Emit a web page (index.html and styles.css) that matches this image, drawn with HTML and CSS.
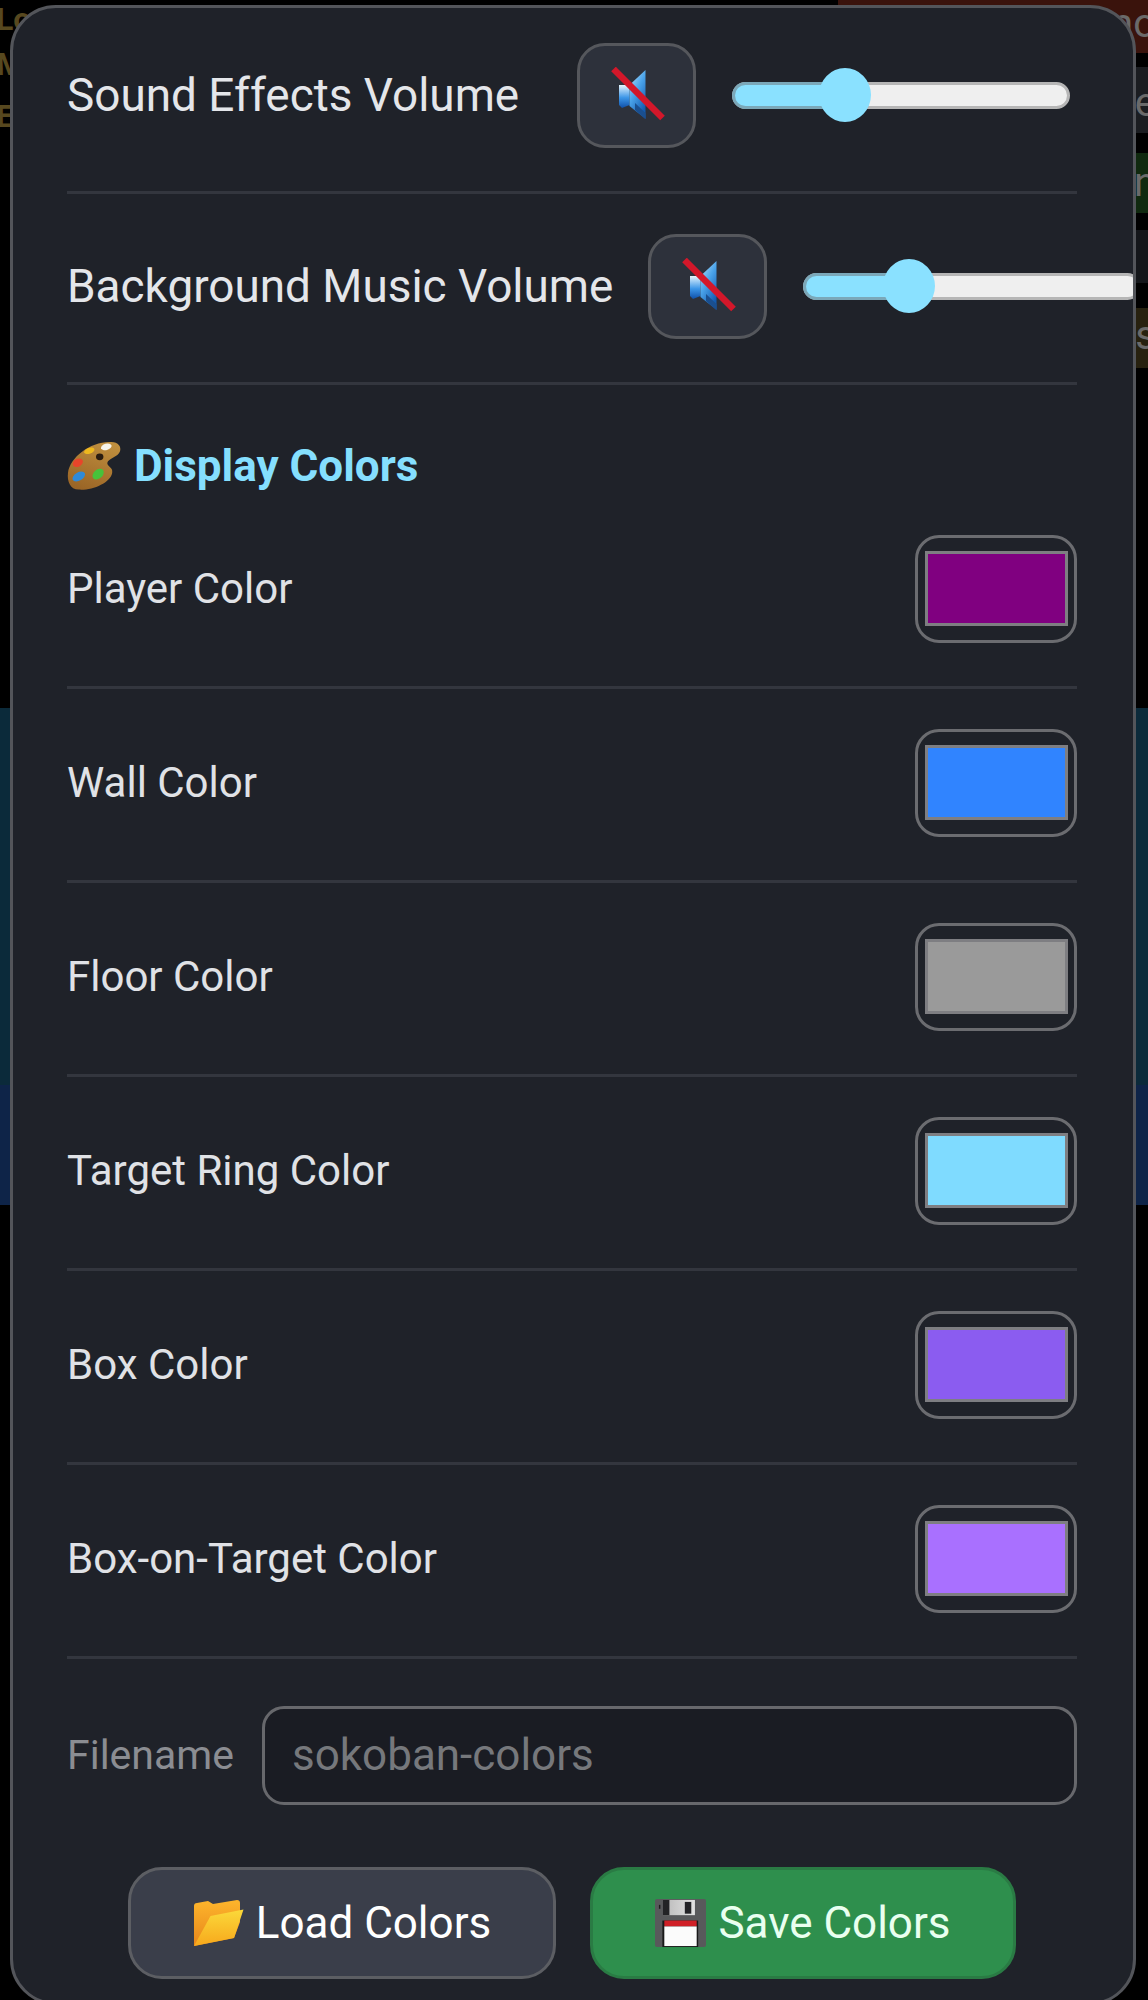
FILE: index.html
```html
<!DOCTYPE html>
<html lang="en">
<head>
<meta charset="utf-8">
<title>Settings</title>
<link rel="stylesheet" href="styles.css">
</head>
<body>
<div class="backdrop">
  <div class="bd-top">
    <div class="bd-left"><div>Lo</div><div>M</div><div>E</div></div>
    <div class="bd-right">
      <div class="bd-strip bd-red">mo</div>
      <div class="bd-strip bd-gray">e</div>
      <div class="bd-strip bd-green">n</div>
      <div class="bd-strip bd-slate"></div>
      <div class="bd-strip bd-olive">s</div>
    </div>
  </div>
  <div class="bd-teal"></div>
  <div class="bd-navy"></div>
</div>

<main class="panel">
  <div class="audio-row">
    <span class="audio-label">Sound Effects Volume</span>
    <div class="audio-controls">
      <button class="mute" type="button" aria-label="Unmute">
        <svg class="mute-icon" viewBox="0 0 56 56"><use href="#muted"/></svg>
      </button>
      <div class="slider"><span class="fill" style="width:113px"></span><span class="thumb" style="left:113px"></span></div>
    </div>
  </div>
  <div class="audio-row">
    <span class="audio-label">Background Music Volume</span>
    <div class="audio-controls">
      <button class="mute" type="button" aria-label="Unmute">
        <svg class="mute-icon" viewBox="0 0 56 56"><use href="#muted"/></svg>
      </button>
      <div class="slider"><span class="fill" style="width:106px"></span><span class="thumb" style="left:106px"></span></div>
    </div>
  </div>

  <h2 class="section-title">
    <svg class="palette" viewBox="0 0 56 50">
      <defs><linearGradient id="wood" x1="0.7" y1="0" x2="0.3" y2="1"><stop offset="0" stop-color="#c08f3e"/><stop offset="1" stop-color="#9a6526"/></linearGradient></defs>
      <path d="M44 .5C52 0 55.5 5 54 10 52 16 42 17 41 22c0 4 6 4 5 10-2 10-20 18-34 17C3 49 0 40 1 32 3 16 24 0 44 .5Z" fill="url(#wood)"/>
      <ellipse cx="40" cy="5.5" rx="5.5" ry="3.2" fill="#f6f4ea" transform="rotate(-15 40 5.5)"/>
      <ellipse cx="22.7" cy="9.5" rx="5.5" ry="3" fill="#eeb81e" transform="rotate(-20 22.7 9.5)"/>
      <ellipse cx="11" cy="21.7" rx="5.5" ry="4" fill="#e8452a" transform="rotate(-30 11 21.7)"/>
      <ellipse cx="12" cy="35.7" rx="7" ry="4.2" fill="#2f8ad8" transform="rotate(-30 12 35.7)"/>
      <ellipse cx="31.7" cy="33.3" rx="6.5" ry="4.5" fill="#47c23a" transform="rotate(-40 31.7 33.3)"/>
      <ellipse cx="33.3" cy="15.7" rx="3.8" ry="3.4" fill="#2a1c10"/>
    </svg>
    <span>Display Colors</span>
  </h2>

  <div class="color-row"><label class="color-label" for="c1">Player Color</label><input class="color-input" id="c1" type="color" value="#800080"></div>
  <div class="color-row"><label class="color-label" for="c2">Wall Color</label><input class="color-input" id="c2" type="color" value="#3084ff"></div>
  <div class="color-row"><label class="color-label" for="c3">Floor Color</label><input class="color-input" id="c3" type="color" value="#9a9a9a"></div>
  <div class="color-row"><label class="color-label" for="c4">Target Ring Color</label><input class="color-input" id="c4" type="color" value="#7fdbff"></div>
  <div class="color-row"><label class="color-label" for="c5">Box Color</label><input class="color-input" id="c5" type="color" value="#8b5cf0"></div>
  <div class="color-row"><label class="color-label" for="c6">Box-on-Target Color</label><input class="color-input" id="c6" type="color" value="#a970ff"></div>

  <div class="file-row">
    <label class="file-label" for="fn">Filename</label>
    <input class="file-input" id="fn" type="text" placeholder="sokoban-colors">
  </div>

  <div class="actions">
    <button class="btn btn-load" type="button">
      <svg class="btn-icon" viewBox="0 0 51 50">
        <defs>
          <linearGradient id="fb" x1="0" y1="0" x2="0" y2="1"><stop offset="0" stop-color="#fdb52c"/><stop offset="1" stop-color="#e8861a"/></linearGradient>
          <linearGradient id="ff" x1="0.5" y1="0" x2="0.5" y2="1"><stop offset="0" stop-color="#fbd93a"/><stop offset="1" stop-color="#f7a81c"/></linearGradient>
        </defs>
        <path d="M1 8Q1 5 4 5L15 3 20 6 44 2Q47 2 47 5V24L41 40 1 48Z" fill="url(#fb)"/>
        <path d="M17.5 18 50.5 11.5 41 40 1 48Z" fill="url(#ff)"/>
      </svg>
      <span>Load Colors</span>
    </button>
    <button class="btn btn-save" type="button">
      <svg class="btn-icon" viewBox="0 0 52 49">
        <defs><linearGradient id="sh" x1="0" y1="0" x2="1" y2="0"><stop offset="0" stop-color="#b8b8b8"/><stop offset="1" stop-color="#e2e2e2"/></linearGradient></defs>
        <rect x="0" y="0" width="52" height="49" rx="2" fill="#58595b"/>
        <rect x="7.7" y="1" width="33" height="15.5" fill="url(#sh)"/>
        <rect x="7.7" y="1" width="7" height="15.5" fill="#232326"/>
        <rect x="30.4" y="3" width="6.6" height="12" fill="#232326"/>
        <rect x="4" y="6" width="1.5" height="4" fill="#1c1c1c"/>
        <rect x="7.5" y="22" width="36.5" height="27" fill="#191919"/>
        <rect x="9.5" y="22" width="33" height="6" fill="#cf1f26"/>
        <rect x="9.5" y="28" width="33" height="20" fill="#fbfbfb"/>
      </svg>
      <span>Save Colors</span>
    </button>
  </div>
</main>

<svg class="defs" aria-hidden="true">
  <defs>
    <linearGradient id="cone" x1="0" y1="0" x2="0.6" y2="1"><stop offset="0" stop-color="#bfe6fb"/><stop offset="0.5" stop-color="#4aa3ea"/><stop offset="1" stop-color="#135bb0"/></linearGradient>
    <linearGradient id="box" x1="0" y1="0" x2="0" y2="1"><stop offset="0" stop-color="#e6f5fd"/><stop offset="0.55" stop-color="#3c96e8"/><stop offset="1" stop-color="#0f4fa8"/></linearGradient>
    <symbol id="muted" viewBox="0 0 56 56">
      <path d="M10 18H20.5V38L13 41 10 38Z" fill="url(#box)"/>
      <path d="M20.5 18 36.5 3V52L20.5 39Z" fill="url(#cone)"/>
      <path d="M26 36 36.5 46V52L26 43Z" fill="#1a4f8f"/>
      <path d="M4.5 2 53.5 51" stroke="#d3172a" stroke-width="6.5"/>
    </symbol>
  </defs>
</svg>
</body>
</html>
```
FILE: styles.css
```css
* { box-sizing: border-box; }

html, body {
  margin: 0;
  width: 1148px;
  height: 2000px;
  overflow: hidden;
  background: #000;
}

body {
  position: relative;
  font-family: Roboto, "Liberation Sans", sans-serif;
}

.defs { width: 0; height: 0; position: absolute; }

/* dimmed page behind the dialog */
.backdrop { height: 2000px; display: flex; flex-direction: column; }
.bd-top { height: 708px; display: flex; justify-content: space-between; }
.bd-left {
  width: 60px;
  font-size: 32px;
  font-weight: 700;
  line-height: 52px;
  color: #57481f;
  margin-left: -4px;
}
.bd-left div:first-child { line-height: 38px; }
.bd-right { width: 310px; display: flex; flex-direction: column; }
.bd-strip {
  text-align: right;
  color: #6a6a6a;
  font-size: 40px;
  line-height: 40px;
  margin-right: -8px;
  overflow: hidden;
}
.bd-red { height: 53px; background: #3a130c; padding-top: 4px; margin-bottom: 14px; }
.bd-gray { height: 66px; background: #1b1d21; padding-top: 16px; margin-bottom: 20px; }
.bd-green { height: 60px; background: #10290f; padding-top: 10px; margin-bottom: 17px; }
.bd-slate { height: 53px; background: #14161a; margin-bottom: 25px; }
.bd-olive { height: 60px; background: #27210f; padding-top: 8px; }
.bd-teal { height: 377px; background: #0b2a3a; }
.bd-navy { height: 120px; background: #0e2448; }

/* dialog */
.panel {
  position: absolute;
  left: 9.5px;
  top: 4.5px;
  width: 1126.5px;
  height: 2000px;
  padding: 0 56px 0 54.5px;
  background: #1f2229;
  border: 3.5px solid #53555a;
  border-radius: 46px;
  overflow: hidden;
}

.audio-row {
  display: flex;
  justify-content: space-between;
  align-items: center;
  gap: 35px;
  padding: 40px 0 43px;
  border-bottom: 3px solid #33363e;
}
.audio-row:first-child { padding-top: 35px; }

.audio-label {
  flex: none;
  font-size: 45.9px;
  line-height: 54px;
  color: #e4e6ea;
  white-space: nowrap;
}

.audio-controls {
  flex: none;
  display: flex;
  align-items: center;
  gap: 36px;
  margin-right: 7px;
}

.mute {
  flex: none;
  width: 119px;
  height: 105px;
  padding: 0;
  display: flex;
  align-items: center;
  justify-content: center;
  background: #2d313b;
  border: 3px solid #55575c;
  border-radius: 28px;
}
.mute-icon { width: 56px; height: 56px; display: block; }

.slider {
  flex: none;
  position: relative;
  width: 338px;
  height: 27px;
  background: #efefef;
  border: 3px solid #b6b6b6;
  border-radius: 14px;
}
.fill {
  position: absolute;
  left: -3px;
  top: -3px;
  bottom: -3px;
  background: #8ae1ff;
  border: 3px solid #7ba8b9;
  border-right: 0;
  border-radius: 14px 0 0 14px;
}
.thumb {
  position: absolute;
  top: 50%;
  width: 52px;
  height: 54px;
  margin: -27px 0 0 -29px;
  background: #8ae1ff;
  border-radius: 50%;
}

.section-title {
  display: flex;
  align-items: center;
  gap: 12px;
  height: 52px;
  margin: 55px 0 3px;
  font-size: 44px;
  font-weight: 700;
  line-height: 52px;
  color: #85dffe;
}
.palette { width: 55px; height: 50px; flex: none; }

.color-row {
  display: flex;
  justify-content: space-between;
  align-items: center;
  padding: 40px 0 43px;
  border-bottom: 3px solid #33363e;
}
.color-label {
  font-size: 42px;
  line-height: 50px;
  color: #e0e2e6;
}
.color-input {
  display: block;
  width: 162px;
  height: 108px;
  padding: 0;
  margin: 0;
  background: transparent;
  border: 3.5px solid #6b6c70;
  border-radius: 24px;
  -webkit-appearance: none;
  appearance: none;
}
.color-input::-webkit-color-swatch-wrapper { padding: 13.5px 6.5px; }
.color-input::-webkit-color-swatch { border: 3px solid #7e7e82; border-radius: 0; }

.file-row {
  display: flex;
  align-items: center;
  gap: 28px;
  margin-top: 47px;
}
.file-label {
  flex: none;
  font-size: 41px;
  color: #8b8d92;
}
.file-input {
  flex: 1;
  min-width: 0;
  height: 99px;
  padding: 0 27px;
  font-family: inherit;
  font-size: 44px;
  color: #e0e2e6;
  background: #1a1c23;
  border: 3px solid #67686c;
  border-radius: 22px;
}
.file-input::placeholder { color: #76787c; opacity: 1; }

.actions {
  display: flex;
  justify-content: center;
  gap: 34px;
  margin-top: 62px;
}
.btn {
  display: flex;
  align-items: center;
  justify-content: center;
  gap: 12px;
  height: 112px;
  padding: 0;
  font-family: inherit;
  font-size: 44px;
  border-radius: 34px;
}
.btn-icon { height: 50px; width: 51px; flex: none; }
.btn-load {
  width: 428px;
  color: #fff;
  background: #3a3e4a;
  border: 3px solid #5c5e63;
}
.btn-save {
  width: 426px;
  color: #e9fff0;
  background: #2e8f4d;
  border: 3px solid #2a7b44;
}
```
